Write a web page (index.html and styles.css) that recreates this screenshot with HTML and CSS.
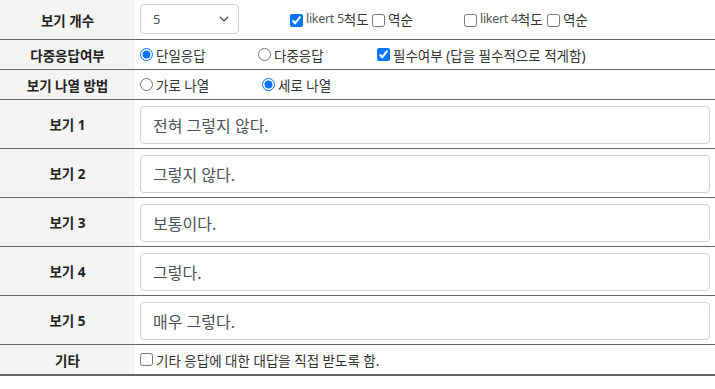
FILE: index.html
```html
<!DOCTYPE html>
<html lang="ko">
  <head>
    <meta charset="UTF-8" />
    <meta name="viewport" content="width=device-width, initial-scale=1.0" />
    <title>보기 설정</title>
    <link rel="stylesheet" href="styles.css">
  </head>
  <body>
    <div class="form-table">
      <!-- 보기 개수 -->
      <div class="row row-top">
        <div class="label">보기 개수</div>
        <div class="field">
          <select class="form-select">
            <option>5</option>
          </select>
          <label class="opt likert5"><input type="checkbox" checked /><span class="latin">likert 5</span>척도</label>
          <label class="opt reverse"><input type="checkbox" /> 역순</label>
          <label class="opt likert4"><input type="checkbox" /><span class="latin">likert 4</span>척도</label>
          <label class="opt"><input type="checkbox" /> 역순</label>
        </div>
      </div>

      <!-- 다중응답여부 -->
      <div class="row row-small">
        <div class="label">다중응답여부</div>
        <div class="field">
          <label class="opt single"><input type="radio" name="multi" checked />단일응답</label>
          <label class="opt multi"><input type="radio" name="multi" />다중응답</label>
          <label class="opt"><input type="checkbox" checked />필수여부 (답을 필수적으로 적게함)</label>
        </div>
      </div>

      <!-- 보기 나열 방법 -->
      <div class="row row-small">
        <div class="label">보기 나열 방법</div>
        <div class="field">
          <label class="opt horiz"><input type="radio" name="dir" />가로 나열</label>
          <label class="opt"><input type="radio" name="dir" checked />세로 나열</label>
        </div>
      </div>

      <div class="row row-item">
        <div class="label">보기 1</div>
        <div class="field"><input class="form-control" type="text" value="전혀 그렇지 않다." /></div>
      </div>
      <div class="row row-item">
        <div class="label">보기 2</div>
        <div class="field"><input class="form-control" type="text" value="그렇지 않다." /></div>
      </div>
      <div class="row row-item">
        <div class="label">보기 3</div>
        <div class="field"><input class="form-control" type="text" value="보통이다." /></div>
      </div>
      <div class="row row-item">
        <div class="label">보기 4</div>
        <div class="field"><input class="form-control" type="text" value="그렇다." /></div>
      </div>
      <div class="row row-item">
        <div class="label">보기 5</div>
        <div class="field"><input class="form-control" type="text" value="매우 그렇다." /></div>
      </div>

      <!-- 기타 -->
      <div class="row row-last">
        <div class="label">기타</div>
        <div class="field">
          <label class="opt"><input type="checkbox" />기타 응답에 대한 대답을 직접 받도록 함.</label>
        </div>
      </div>
    </div>
  </body>
</html>
```

FILE: styles.css
```css
body {
  margin: 0;
  font-family: "Noto Sans", "Noto Sans CJK KR", sans-serif;
  font-size: 13.5px;
  color: #333;
  background: white;
}

.form-table {
  width: 100%;
}

.row {
  display: flex;
  box-sizing: border-box;
  border-bottom: 1px solid #666;
}

.row-top {
  height: 40px;
}

.row-small {
  height: 30px;
}

.row-item {
  height: 49px;
}

.row-last {
  height: 31px;
  border-bottom-width: 2px;
}

.label {
  width: 135px;
  flex-shrink: 0;
  display: flex;
  align-items: center;
  justify-content: center;
  background: #f4f4f4;
  font-weight: bold;
  color: #222;
}

.field {
  flex: 1;
  display: flex;
  align-items: center;
  padding: 0 5px;
  white-space: nowrap;
}

.row-top .field {
  padding-bottom: 2px;
}

.row-item .field {
  padding-top: 1px;
}

/* 선택 옵션 */
.opt {
  display: inline-flex;
  align-items: center;
  color: #333;
}

.opt input {
  margin: 0 3px 0 0;
  width: 13px;
  height: 13px;
}

.row-top .opt input {
  margin-top: 3px;
}

.latin {
  font-size: 12.5px;
  letter-spacing: -0.3px;
  color: #555;
}

.likert5 {
  margin-left: 51px;
  width: 82px;
}

.reverse {
  width: 92px;
}

.likert4 {
  width: 83px;
}

.single {
  width: 118px;
}

.multi {
  width: 119px;
}

.horiz {
  width: 122px;
}

/* 입력 */
.form-select {
  appearance: none;
  width: 99px;
  height: 30px;
  padding: 0 30px 0 12px;
  font-family: inherit;
  font-size: 13px;
  color: #495057;
  background: white url("data:image/svg+xml,%3csvg xmlns='http://www.w3.org/2000/svg' viewBox='0 0 16 16'%3e%3cpath fill='none' stroke='%23343a40' stroke-linecap='round' stroke-linejoin='round' stroke-width='2' d='m2 5 6 6 6-6'/%3e%3c/svg%3e") no-repeat right 8px center;
  background-size: 12px 10px;
  border: 1px solid #ced4da;
  border-radius: 4px;
}

.form-control {
  width: 100%;
  height: 38px;
  box-sizing: border-box;
  padding: 0 12px;
  font-family: inherit;
  font-size: 16px;
  color: #495057;
  border: 1px solid #ced4da;
  border-radius: 4px;
}
```
